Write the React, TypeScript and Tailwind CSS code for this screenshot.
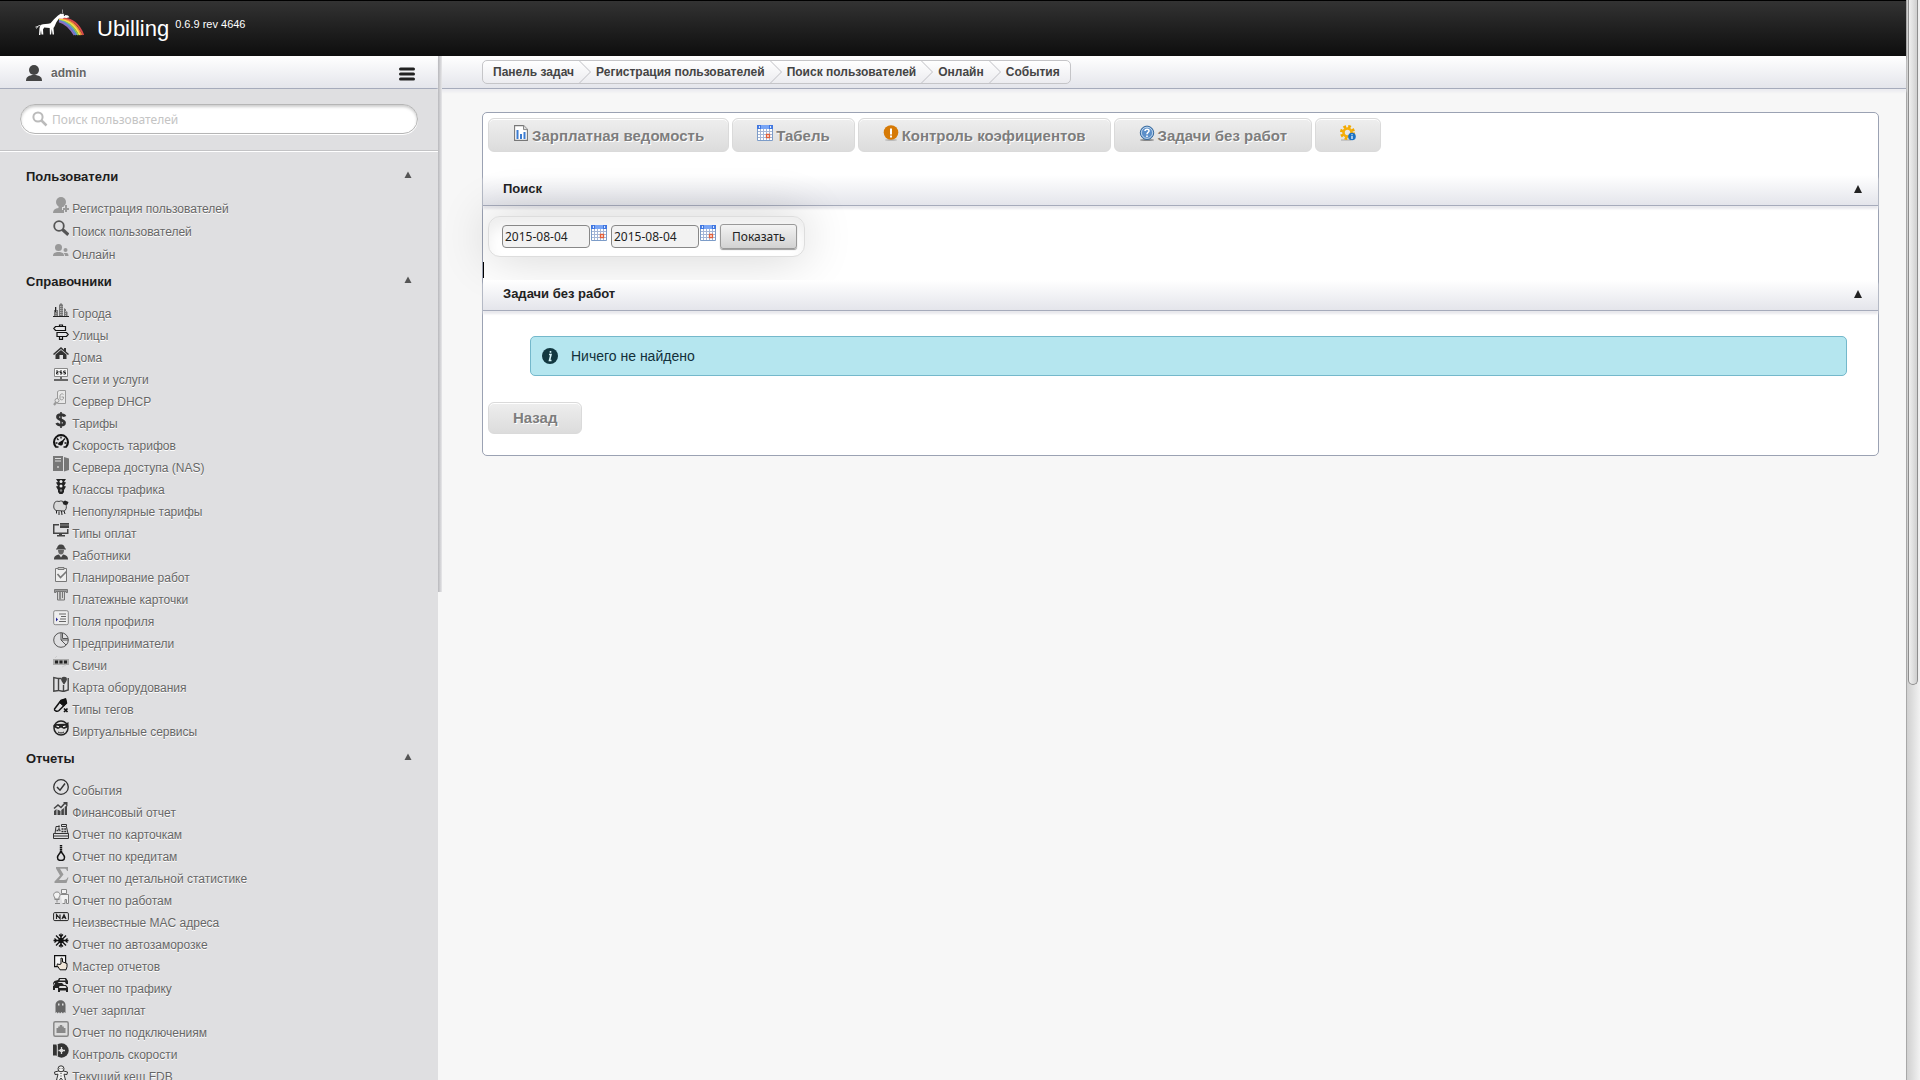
/**
 * Ubilling admin page
 *
 * Header, collapsible side menu, breadcrumbs and the "tasks without jobs" report.
 */

import { useState } from "react";
import type { ReactNode } from "react";

// 16x16 menu glyphs, keyed by the menu entry that uses them
const GLYPHS: Record<string, ReactNode> = {
  register: (
    <g fill="#999">
      <circle cx="8" cy="5" r="5" />
      <path d="M0 16c0-3 2-4.500 5.500-5V8h5l.2 2H9v3h2v3z" />
      <path d="M12 8h2v3h2v2h-2v2h-2v-2h-2v-2h2z" />
    </g>
  ),
  find: (
    <g fill="none" stroke="#555">
      <circle cx="6" cy="6" r="4.800" strokeWidth="1.800" />
      <path d="M9.500 9.500l5.800 5.300" strokeWidth="3.200" />
    </g>
  ),
  online: (
    <g fill="#999">
      <circle cx="5.500" cy="4.500" r="3.500" />
      <path d="M0 13c0-3 2-3.500 4-4h3c2 .5 4 1 4 4z" />
      <circle cx="12.500" cy="7" r="2" />
      <path d="M10.500 10h3c1.500.3 2 1 2 3h-3.500c0-1.500-.5-2-1.500-3z" />
    </g>
  ),
  cities: (
    <g>
      <path d="M1 15V8h1.500V5h1v3H5v7zM6 15V3l2-2 2 2v12zM11 15V6l2 1.500V9l1.500 1v5z" fill="#777" />
      <path d="M7.500 4v10M9 4v10M12.500 9v5M3 9v5" stroke="#ddd" strokeWidth=".6" strokeDasharray="1 1" />
      <path d="M0 14.500h16M2.500 5v5" stroke="#222" />
    </g>
  ),
  streets: (
    <g fill="#e4e4e6" stroke="#111" strokeWidth="1.200">
      <path d="M6.500 3V1h3v2M6.500 13v2.300h3V13" />
      <path d="M2.500 2.500h10v4h-10L.8 4.500zM4 8.500h9.500l1.700 2-1.700 2H4z" />
    </g>
  ),
  homes: (
    <g fill="#333">
      <path d="M8 1L0 8l1 1 7-6 7 6 1-1-3-2.600V2h-2v1.700z" />
      <path d="M2.500 8.500L8 4l5.500 4.500V13H10V9H6.500v4h-4z" />
    </g>
  ),
  networks: (
    <g>
      <path d="M1.500.5h13v8h-13z" fill="#f8f8f8" stroke="#888" />
      <path d="M3 3h2v1.500H3.500V6h2M7 6h1.800V4.500H7V3h2M10.500 6h2V4.500h-1.800V3h2" fill="none" stroke="#222" />
      <path d="M7 9h2v2h6v2H1v-2h6z" fill="#666" />
    </g>
  ),
  dhcp: (
    <g fill="#e8e8e8" stroke="#999">
      <path d="M4.500 1.500l2-1h6v13h-8z" />
      <path d="M10.500 4.500C10 3.500 7 3.500 7 6v3c1 1.500 4 1 3.500-2H8.500" fill="none" />
      <path d="M1 15l4-5" strokeWidth="2.200" />
      <circle cx="4" cy="10.500" r="2" />
    </g>
  ),
  tariffs: (
    <g fill="none" stroke="#333">
      <path d="M12 4.500C11 2.300 4.500 1.800 4.500 5c0 3.200 7 2.500 7 5.800 0 3.200-6.500 3-7.800.2" strokeWidth="2.800" />
      <path d="M8 0v16" strokeWidth="1.600" />
    </g>
  ),
  speed: (
    <g>
      <path d="M3 13A7 7 0 1 1 13 13" fill="none" stroke="#111" strokeWidth="2" />
      <path d="M2.500 9h2M4 4.500l1.500 1.500M8 2.500v2M12 4.500l-1.500 1.500M13.500 9h-2" stroke="#111" strokeWidth="1.300" />
      <path d="M5 10.500c0-2 1.500-2.500 2.500-3l4-2.500-1.500 4c0 2-1 2.500-2.500 2.500z" fill="#111" />
      <path d="M2.500 13h3M10.500 13h3" stroke="#111" strokeWidth="1.500" />
    </g>
  ),
  nas: (
    <g>
      <path d="M0 0h10v15H0zM11 1l5 1.500V14l-5 1.500z" fill="#777" />
      <path d="M2 2.500h6M2 5h6" stroke="#ddd" />
      <circle cx="5" cy="11" r="1" fill="#ccc" />
    </g>
  ),
  traffic: (
    <g>
      <path d="M3 1h10l-2 3 2 .5-2 3.500 2 .5-2 3.500v2l-1.500 2h-3L5 14v-2L3 8.500 5 8 3 4.500 5 4z" fill="#222" />
      <circle cx="8" cy="3.500" r="1.500" fill="#eee" />
      <circle cx="8" cy="8" r="1.500" fill="#eee" />
      <circle cx="8" cy="12.500" r="1.200" fill="#888" />
    </g>
  ),
  unpopular: (
    <g>
      <path d="M1.500 3C2 1 5 1 6 1.500c2-1 4-.5 5 1l2 2c1 3 0 6-2 6.500l-8-.5C0 9 .5 5 1.500 3z" fill="#d8d8d8" stroke="#444" />
      <path d="M9.500 2l2.500-1.500L15.500 2l-1 2.500-2 .5-2-.5z" fill="#222" />
      <path d="M3.500 11v2.500M6 11.500V15M8.500 11l.5 4M11 11l1 3" stroke="#222" />
    </g>
  ),
  payments: (
    <g fill="#444">
      <path d="M0 2h6v1.500H1.500v7H14V7h1.500v5H0zM6 12h3v1h3v1.500H4V13h2z" />
      <path d="M7 1h9v5H7z" />
      <path d="M7 3h9" stroke="#aaa" strokeWidth=".7" />
    </g>
  ),
  workers: (
    <g fill="#444">
      <path d="M4 4.500C4.500 1 6.500.5 8 .5s3.500.5 4 4h1v1H3v-1z" />
      <path d="M5 6h6c0 3-1.500 4.500-3 4.500S5 9 5 6z" fill="#666" />
      <path d="M1 15.500c0-3.500 2-4.500 5-5l2 3 2-3c3 .5 5 1.500 5 5z" />
    </g>
  ),
  planning: (
    <g fill="none" stroke="#777">
      <path d="M2.500 2.500h11v13h-11z" fill="#eee" />
      <path d="M5 1.500h6v2H5z" fill="#ccc" />
      <path d="M4.500 8l3 3.500L13.500 5.500" strokeWidth="1.600" />
    </g>
  ),
  cards: (
    <g stroke="#777">
      <path d="M1.500 1.500h13v3H13v-1H3v1H1.500z" fill="#999" />
      <path d="M4.500 3.500h7v8.500h-7z" fill="#d4d4d4" />
      <path d="M7 4v7.500" strokeWidth="1.500" />
      <path d="M9.500 4v6" />
    </g>
  ),
  fields: (
    <g>
      <rect x=".7" y=".7" width="14.600" height="14" rx="1.500" fill="#eee" stroke="#888" />
      <path d="M6 4h7M8 6.500h5M7 9h6M6 11.500h7" stroke="#666" />
      <path d="M3 7.500L5 9.500 3 11.500z" fill="#229" />
    </g>
  ),
  business: (
    <g fill="none" stroke="#555">
      <circle cx="8" cy="8" r="7.300" />
      <path d="M8 .7V8l5 5M8 8h7.300M9.500 1v5.500H15" />
    </g>
  ),
  switches: (
    <g>
      <path d="M0 5h16v6H0z" fill="#aaa" />
      <path d="M2 6.500h3v3H2zM6.500 6.500h3v3h-3zM11 6.500h3v3h-3z" fill="#222" />
      <path d="M2 4l2-2M9 13l4-2" stroke="#ccc" />
    </g>
  ),
  map: (
    <g fill="none" stroke="#444" strokeWidth="1.400">
      <path d="M5.500 14.500L.8 15.200V1.500L5.500 2.500v12l5 1 4.700-1.500V2M10.500 15V9M5.500 2.500H8" />
      <path d="M11 1.500c3 0 3 2.500 0 6-3-3.500-3-6 0-6z" fill="#444" />
    </g>
  ),
  tags: (
    <g fill="none" stroke="#111">
      <path d="M1.500 11L8 2.500 12.500 1l1 4L6 12.500c-2 1.500-5 .5-4.500-1.500z" strokeWidth="1.500" />
      <path d="M8 2.500l4.500-1.500 1 4-3 3-4-3.500z" fill="#111" />
      <path d="M11 10.500l3.500 3.500M14.500 10.500L11 14" strokeWidth="1.700" />
    </g>
  ),
  virtual: (
    <g>
      <circle cx="8" cy="8" r="7" fill="#ddd" stroke="#222" strokeWidth="1.500" />
      <path d="M.5 5l3-1 9-.2L15.500 2v5L11 9 8 7.500 5 9 .5 7z" fill="#222" />
      <path d="M3.500 6l2.500.8M10 6.800l2.500-.8" stroke="#fff" strokeWidth="1.200" />
      <path d="M5 12c2 1.300 4 1.300 6 0" fill="none" stroke="#222" />
    </g>
  ),
  events: (
    <g fill="none" stroke="#333">
      <circle cx="8" cy="8" r="7.300" strokeWidth="1.300" />
      <path d="M4 8l3 3.200L12 4.500" strokeWidth="1.500" />
    </g>
  ),
  finance: (
    <g fill="#444">
      <path d="M1 10l2.500-2V14H1zM4.500 8.500L7.500 10v4h-3zM8.300 9l2.600-2v7H8.300zM11.700 6l2.300-2v10h-2.300z" />
      <path d="M1 7.500L5 4l3 2.500L12 2" fill="none" stroke="#444" strokeWidth="1.500" />
      <path d="M10 1h4.500v4.500z" />
    </g>
  ),
  till: (
    <g fill="none" stroke="#333">
      <path d="M.5 10.500h15v5H.5zM2 10.500L3 3.500h3M1 13h14" />
      <path d="M8.500 1.500h5v2h-5zM13.500 4l1.500 6.500" />
      <path d="M6 2.500V7M3.500 7.500h4M8.500 6h5M8.500 8.500h5.500" strokeWidth="1.500" strokeDasharray="2 .7" />
    </g>
  ),
  credits: (
    <g fill="none" stroke="#111">
      <path d="M8 0v7" strokeWidth="2.400" strokeDasharray="1.600 .4" />
      <path d="M8 6.500c-1.500 2.500-3.500 3.500-3.500 6C4.500 14.500 6 15.500 8 15.500s3.500-1 3.500-3c0-2.500-2-3.500-3.500-6z" strokeWidth="1.500" />
    </g>
  ),
  stats: <path d="M3 0h12v4h-1c-.5-2-1-2.300-3-2.300H7l3.500 5.800L6 13h5c2 0 2.500-.7 3.500-2.500h1L13.500 16H1.500v-1.500L7 8.500 3 1.500z" fill="#999" />,
  jobs: (
    <g fill="#f2f2f2" stroke="#888">
      <path d="M8.500.5h5v4h-5zM7.500 5.500h8v9h-2v-4h-1.500v4H9.500" />
      <path d="M1.500 8C-.5 6 1 3 4 3s4 3 2 5v2H2zM1.500 10.500h5M4 10.500v3M2 14.500h5" />
    </g>
  ),
  unknown: (
    <g fill="none" stroke="#222">
      <rect x=".6" y="1.600" width="14.800" height="8" rx="1.200" />
      <path d="M3.500 8V3.700L7 7.700V3.500M9 8l2-4.300L13 8M9.500 6.700h3" strokeWidth="1.200" />
    </g>
  ),
  freeze: (
    <g stroke="#111" strokeWidth="1.300" fill="none">
      <path d="M8 .5v14M.5 7.500h15M3 2.500l10 10M13 2.500l-10 10" />
      <path d="M6 1.500l2 2 2-2M6 13.500l2-2 2 2M1.500 5.500l2 2-2 2M14.500 5.500l-2 2 2 2" />
      <circle cx="8" cy="7.500" r="2" />
    </g>
  ),
  master: (
    <g stroke="#111">
      <path d="M1.600.6h11v11h-11z" fill="#f5f5f5" strokeWidth="1.200" />
      <path d="M6 9.500l-1.500-.7-.5 1.500 3 4.500h6l1-3V8.500l-2-.7-1-.5-1.500-.3V3.500L8 3v6z" fill="#f0e6d8" />
    </g>
  ),
  cars: (
    <g fill="#222">
      <path d="M5 3L6 1h7l2 3v3h-2l-1-2H6L4.500 6H1L0 9V6l1.500-2z" />
      <path d="M1 8.500L2 6h7l2 2h2l2 2.500V15h-2v-1.500H7V15H5v-4H2v2H0V9z" />
      <path d="M6.500 9h6l1 2h-7.500zM7 2h5l.5 1.500H6.500z" fill="#ddd" />
    </g>
  ),
  salary: (
    <g>
      <path d="M2.500 14V6C2.500-.5 12.500-.5 12.500 6v8l-1.500-1-1 1.500L8.500 13 7 14.500 6 13l-1.500 1.500-.7-1.500z" fill="#666" />
      <path d="M5 4.500h1.500v2H5zM9 4.500h1.500v2H9z" fill="#ddd" />
    </g>
  ),
  signup: (
    <g>
      <rect x=".8" y=".8" width="14.400" height="14.400" rx="1.500" fill="#ddd" stroke="#888" strokeWidth="1.500" />
      <path d="M3.500 12V7h1.700V5.500h1.600V4h2.400v1.500h1.600V7h1.700v5z" fill="#888" />
    </g>
  ),
  control: (
    <g>
      <circle cx="8.500" cy="7.500" r="7.200" fill="#333" />
      <path d="M0 1.500h3.500v11H0z" fill="#333" />
      <path d="M4.300 2v11" stroke="#ddd" />
      <path d="M8.500 4v7M5.500 7.500h6.500" stroke="#ddd" strokeWidth="1.300" />
      <circle cx="8.500" cy="7.500" r="1.800" fill="#ddd" />
    </g>
  ),
  fdb: (
    <g fill="#eee" stroke="#333">
      <path d="M5.500 6L1.500 7l.5 2.500 3-.3-1.500 6 2.500.5L8 13l2 2.700 2.500-.5L11 9.200l3 .3.500-2.500-4-1z" />
      <circle cx="8" cy="3.800" r="3" />
      <path d="M6.500 3.500h.7M8.800 3.500h.7M8 8v1M8 10.500v1" />
    </g>
  ),
};

type MenuEntry = { glyph: string; label: string };

const MENU: { title: string; gap: string; items: MenuEntry[] }[] = [
  {
    title: "Пользователи",
    gap: "gap-px",
    items: [
      { glyph: "register", label: "Регистрация пользователей" },
      { glyph: "find", label: "Поиск пользователей" },
      { glyph: "online", label: "Онлайн" },
    ],
  },
  {
    title: "Справочники",
    gap: "gap-0",
    items: [
      { glyph: "cities", label: "Города" },
      { glyph: "streets", label: "Улицы" },
      { glyph: "homes", label: "Дома" },
      { glyph: "networks", label: "Сети и услуги" },
      { glyph: "dhcp", label: "Сервер DHCP" },
      { glyph: "tariffs", label: "Тарифы" },
      { glyph: "speed", label: "Скорость тарифов" },
      { glyph: "nas", label: "Сервера доступа (NAS)" },
      { glyph: "traffic", label: "Классы трафика" },
      { glyph: "unpopular", label: "Непопулярные тарифы" },
      { glyph: "payments", label: "Типы оплат" },
      { glyph: "workers", label: "Работники" },
      { glyph: "planning", label: "Планирование работ" },
      { glyph: "cards", label: "Платежные карточки" },
      { glyph: "fields", label: "Поля профиля" },
      { glyph: "business", label: "Предприниматели" },
      { glyph: "switches", label: "Свичи" },
      { glyph: "map", label: "Карта оборудования" },
      { glyph: "tags", label: "Типы тегов" },
      { glyph: "virtual", label: "Виртуальные сервисы" },
    ],
  },
  {
    title: "Отчеты",
    gap: "gap-0",
    items: [
      { glyph: "events", label: "События" },
      { glyph: "finance", label: "Финансовый отчет" },
      { glyph: "till", label: "Отчет по карточкам" },
      { glyph: "credits", label: "Отчет по кредитам" },
      { glyph: "stats", label: "Отчет по детальной статистике" },
      { glyph: "jobs", label: "Отчет по работам" },
      { glyph: "unknown", label: "Неизвестные MAC адреса" },
      { glyph: "freeze", label: "Отчет по автозаморозке" },
      { glyph: "master", label: "Мастер отчетов" },
      { glyph: "cars", label: "Отчет по трафику" },
      { glyph: "salary", label: "Учет зарплат" },
      { glyph: "signup", label: "Отчет по подключениям" },
      { glyph: "control", label: "Контроль скорости" },
      { glyph: "fdb", label: "Текущий кеш FDB" },
    ],
  },
];

const CRUMBS = ["Панель задач", "Регистрация пользователей", "Поиск пользователей", "Онлайн", "События"];

function Icon({ children, className = "inline-block align-baseline" }: { children: ReactNode; className?: string }) {
  return (
    <svg viewBox="0 0 16 16" className={`h-4 w-4 shrink-0 ${className}`} aria-hidden="true">
      {children}
    </svg>
  );
}

function Logo() {
  return (
    <svg viewBox="0 0 50 28" className="h-7 w-[50px]" aria-hidden="true">
      <g fill="none" strokeWidth="1.800">
        <path d="M24 10C37 8 44 15 48.300 26" stroke="#d9484d" />
        <path d="M24 10.500C36 9.500 42 17 46.500 26" stroke="#f08a3c" />
        <path d="M24 11C35 11 41 18 44.700 26" stroke="#f5e04a" />
        <path d="M24 11.500C34 12.500 39.500 19 43 26" stroke="#8fc85a" />
        <path d="M24 12C33 13.500 38 20 41.300 26" stroke="#5b8fd8" />
        <path d="M24 12.300C32 14.500 36.500 21 39.500 26" stroke="#8a6fc0" />
      </g>
      <path
        d="M5.500 16c3-1.500 7-.8 10-1.800l3.500-4 4-3.700 3-2 1 .8 1-1 1 1.500 4 .7 1.500 1.700-3 .8-2.500-.2-1.500 1-3.500-.3-2.500 3.500-2 4.500-1 1.500.5 6.500h-1.400l-.8-5.500-.7 5.500h-1.200l-.2-6.500-5.500-.5-1.200 2 .3 5H6.500L6 21l-.7 5H4l.5-7z"
        fill="#fff"
      />
      <path d="M5 16.500c-2 0-2 1.500-4.500 1.500M3 17l-1.500 2.500" stroke="#ddd" fill="none" />
      <path d="M27.500 4V.5" stroke="#aaa" strokeWidth=".8" />
      <circle cx="29.500" cy="6.300" r=".7" fill="#222" />
    </svg>
  );
}

function CalendarGlyph() {
  return (
    <>
      <path d="M.5.5h15v15H.5z" fill="#fff" stroke="#7c9cc8" />
      <path d="M1 6.500h14M1 9.500h14M1 12.500h14M3.500 4v11M6.500 4v11M9.500 4v11M12.500 4v11" stroke="#a5b6d6" />
      <path d="M0 0h16v4H0z" fill="#3f76e0" />
      <path d="M4 0h8v4H4z" fill="#79a5f5" />
      <path d="M3 .8v2.400L1.500 2zM13 .8v2.400L14.500 2z" fill="#fff" />
      <path d="M9.500 9.500h3v3h-3z" fill="#fff" stroke="#e2603a" strokeWidth="1.300" />
    </>
  );
}

const TOOLBAR: { label: string; glyph: ReactNode }[] = [
  {
    label: "Зарплатная ведомость",
    glyph: (
      <>
        <path d="M1.600.6h9l3.800 3.800v11H1.600z" fill="#fff" stroke="#777" strokeWidth="1.100" />
        <path d="M10.500.6v4h4" fill="#ddd" stroke="#888" />
        <path d="M3.500 5h2v9h-2zM7 9h2v5H7zM10.500 7h2v7h-2z" fill="#3b7bd0" />
      </>
    ),
  },
  { label: "Табель", glyph: <CalendarGlyph /> },
  {
    label: "Контроль коэфициентов",
    glyph: (
      <>
        <ellipse cx="8" cy="15" rx="6" ry="1" fill="#bbb" />
        <circle cx="8" cy="7.500" r="7.300" fill="#d67a06" />
        <path d="M7 3.500h2v6H7zM7 10.500h2v2H7z" fill="#fff" />
      </>
    ),
  },
  {
    label: "Задачи без работ",
    glyph: (
      <>
        <ellipse cx="8" cy="15" rx="7" ry="1" fill="#888" />
        <circle cx="8" cy="7.800" r="6.700" fill="#5c8fc9" stroke="#376a9d" />
        <circle cx="8" cy="7.800" r="5.600" fill="none" stroke="#d5e4f3" strokeWidth=".8" />
        <path d="M6 6c0-2.500 4.300-2.300 4 0-.2 1.500-2 1.300-2 3.200M8 10.500v1.500" fill="none" stroke="#fff" strokeWidth="1.600" />
      </>
    ),
  },
  {
    label: "",
    glyph: (
      <>
        <path d="M1 15h10" stroke="#bbb" strokeWidth="1.500" />
        <circle cx="7.500" cy="7.500" r="6" fill="none" stroke="#f2a900" strokeWidth="3" strokeDasharray="2.600 2.110" />
        <circle cx="7.500" cy="7.500" r="4" fill="none" stroke="#f5ae0a" strokeWidth="2.600" />
        <circle cx="12" cy="11.500" r="3.800" fill="#1c72c4" />
        <path d="M12 9.300v1M12 11v3" stroke="#fff" strokeWidth="1.200" />
      </>
    ),
  },
];

const BUTTON =
  "flex items-center rounded-md border border-[#dadada] bg-linear-to-b from-[#eeeeee] to-[#dcdcdc] px-6 text-[15px] leading-[30px] font-bold text-[#7d7d7d] shadow-[inset_0_1px_0_#ffffff] [text-shadow:1px_1px_0_#ffffff]";

const BAR = "border-b border-[#a6abbb] bg-linear-to-b from-white to-[#e4e5eb]";

function MenuSection({ title, gap, items }: { title: string; gap: string; items: MenuEntry[] }) {
  const [open, setOpen] = useState(true);

  return (
    <section className="pb-[7px]">
      <h3>
        <button
          type="button"
          onClick={() => setOpen(!open)}
          className="flex w-full items-start justify-between pr-[26px] pl-[26px] text-left text-[13px] leading-5 font-bold text-[#1d1d1d]"
        >
          <span>{title}</span>
          <svg viewBox="0 0 8 8" className="mt-1 h-2 w-2" aria-hidden="true">
            <path d="M4 .5L7.500 7H.5z" fill="#555" />
          </svg>
        </button>
      </h3>
      {open && (
        <ul className={`flex flex-col pt-[10px] pl-[53px] leading-5 ${gap}`}>
          {items.map((item) => (
            <li key={item.label}>
              <a href="#" className="text-[#666666]">
                <Icon>{GLYPHS[item.glyph]}</Icon> {item.label}
              </a>
            </li>
          ))}
        </ul>
      )}
    </section>
  );
}

function Sidebar() {
  return (
    <aside className="w-[438px] shrink-0 bg-[#dfdfe1] [text-shadow:0_1px_0_#ffffff]">
      <div className={`flex h-[33px] items-center justify-between pt-[2px] pr-[23px] pl-[26px] ${BAR}`}>
        <a href="#" className="flex items-center gap-[9px] font-bold text-[#666666]">
          <Icon className="block">
            <g fill="#444">
              <circle cx="8" cy="5" r="5" />
              <path d="M0 16c0-4 2-5 6-6h4c4 1 6 2 6 6z" />
            </g>
          </Icon>
          admin
        </a>
        <button type="button" aria-label="Меню">
          <Icon className="block">
            <path d="M1.500 4h13M1.500 9h13M1.500 14h13" stroke="#222" strokeWidth="3" strokeLinecap="round" />
          </Icon>
        </button>
      </div>

      <div className="border-b border-[#c3c3c5] px-5 pt-[15px] pb-4">
        <label className="flex h-[30px] items-center gap-1 rounded-full border border-[#b5b5b5] bg-white px-[11px] shadow-[inset_0_2px_3px_#cccccc,0_1px_0_#ffffff]">
          <Icon className="block">
            <circle cx="6" cy="6" r="4.600" fill="none" stroke="#bbb" strokeWidth="2" />
            <path d="M9.500 9.500l5 5" stroke="#bbb" strokeWidth="2.500" />
          </Icon>
          <input
            type="text"
            aria-label="Поиск пользователей"
            placeholder="Поиск пользователей"
            className="w-full bg-transparent pt-[2px] font-['Noto_Sans',sans-serif] text-xs outline-none placeholder:text-[#c4c4c4]"
          />
        </label>
      </div>

      <nav className="border-t border-white pt-[15px]">
        {MENU.map((section) => (
          <MenuSection key={section.title} {...section} />
        ))}
      </nav>
    </aside>
  );
}

function Breadcrumbs() {
  return (
    <nav className={`flex h-[33px] shrink-0 items-center pl-11 shadow-[0_3px_2px_#ececf0] ${BAR}`}>
      <ol className="flex h-6 items-stretch overflow-hidden rounded-[5px] border border-[#c5c5c8] bg-linear-to-b from-white to-[#ececf0] px-[10px] font-bold">
        {CRUMBS.map((crumb, i) => (
          <li key={crumb} className="flex items-stretch">
            {i > 0 && (
              <svg viewBox="0 0 12 22" className="mr-[5px] ml-[5px] h-[22px] w-3" aria-hidden="true">
                <path d="M.5 0L11.500 11 .5 22" fill="none" stroke="#bfbfc4" />
              </svg>
            )}
            <a href="#" className="leading-[22px] text-[#444444]">
              {crumb}
            </a>
          </li>
        ))}
      </ol>
    </nav>
  );
}

function PanelHeader({ title, open, onToggle }: { title: string; open: boolean; onToggle: () => void }) {
  return (
    <h3>
      <button
        type="button"
        aria-expanded={open}
        onClick={onToggle}
        className={`flex h-[31px] w-full items-center justify-between pr-4 pb-[2px] pl-5 text-[13px] font-bold text-[#222222] shadow-[0_3px_2px_#e9e9ed] ${BAR}`}
      >
        <span>{title}</span>
        <svg viewBox="0 0 8 8" className="h-2 w-2" aria-hidden="true">
          <path d="M4 0L8 8H0z" fill="#222" />
        </svg>
      </button>
    </h3>
  );
}

function DateField({ label }: { label: string }) {
  return (
    <div className="flex items-start gap-px pt-px">
      <input
        type="text"
        aria-label={label}
        defaultValue="2015-08-04"
        className="h-[23px] w-[88px] rounded border border-[#888888] bg-[#f2f2f2] px-[2px] text-xs text-[#222222]"
      />
      <Icon className="block">
        <CalendarGlyph />
      </Icon>
    </div>
  );
}

function Content() {
  const [searchOpen, setSearchOpen] = useState(true);
  const [tasksOpen, setTasksOpen] = useState(true);

  return (
    <main className="mt-[23px] mr-[27px] ml-11 rounded-[5px] border border-[#9ba2b3] bg-white pb-[21px]">
      {/* Toolbar */}
      <div className="flex gap-[3px] px-[5px] pt-[5px] pb-[23px]">
        {TOOLBAR.map((item) => (
          <a key={item.label} href="#" className={`h-[34px] gap-[3px] pt-[2px] ${BUTTON}`}>
            <Icon className="mb-[6px] block">{item.glyph}</Icon>
            {item.label}
          </a>
        ))}
      </div>

      {/* Search */}
      <PanelHeader title="Поиск" open={searchOpen} onToggle={() => setSearchOpen(!searchOpen)} />
      {searchOpen && (
        <div className="px-[5px] pt-[10px] pb-[5px]">
          <form
            onSubmit={(e) => e.preventDefault()}
            className="flex h-[41px] w-fit items-start gap-1 rounded-xl border border-[#dddddd] bg-white pt-[7px] pr-[7px] pl-[13px] font-['Noto_Sans',sans-serif] shadow-[0_0_50px_#00000030,inset_0_10px_14px_#eeeeee]"
          >
            <DateField label="С" />
            <DateField label="По" />
            <button
              type="submit"
              className="h-[25px] rounded-[3px] border border-[#999999] bg-linear-to-b from-[#f3f3f3] to-[#d2d2d2] px-[11px] text-xs text-[#222222] shadow-[0_1px_1px_#999999]"
            >
              Показать
            </button>
          </form>
        </div>
      )}
      <div className="mb-[2px] h-4 w-px bg-black" />

      {/* Tasks without jobs */}
      <PanelHeader title="Задачи без работ" open={tasksOpen} onToggle={() => setTasksOpen(!tasksOpen)} />
      {tasksOpen && (
        <div className="pt-[25px] pr-[31px] pb-[26px] pl-[47px]">
          <div className="flex h-10 items-center gap-[13px] rounded-[5px] border border-[#74b8cb] bg-[#b5e6ef] px-[11px] text-sm text-[#12303a]">
            <Icon className="block">
              <circle cx="8" cy="8" r="8" fill="#123840" />
              <path d="M7 6.500h2L7.500 12.500h2M8.500 3v1.800" fill="none" stroke="#d5f2f7" strokeWidth="1.600" />
            </Icon>
            Ничего не найдено
          </div>
        </div>
      )}

      <div className="flex px-[5px]">
        <a href="#" className={`h-8 ${BUTTON}`}>
          Назад
        </a>
      </div>
    </main>
  );
}

export default function App() {
  return (
    <div className="flex h-screen overflow-hidden bg-[#f7f7f7] font-['Liberation_Sans',Arial,sans-serif] text-xs">
      <div className="flex min-w-0 flex-1 flex-col">
        {/* Header */}
        <header className="flex h-14 shrink-0 items-start border-t border-black bg-linear-to-b from-[#333333] to-[#0e0e0e] pl-[35px] text-white">
          <div className="pt-2">
            <Logo />
          </div>
          <h1 className="pt-[14px] pl-3 text-[22px] leading-7">Ubilling</h1>
          <span className="pt-[15px] pl-[6px] text-[11px] leading-4">0.6.9 rev 4646</span>
        </header>

        <div className="flex min-h-0 flex-1 items-start">
          <Sidebar />
          <div className="relative min-w-0 flex-1">
            <Breadcrumbs />
            <Content />
            <div className="absolute top-0 left-0 h-[536px] w-1 bg-linear-to-r from-[#b8b8bc] to-[#e8e8ea]" />
          </div>
        </div>
      </div>

      {/* Scrollbar */}
      <div className="h-full w-[14px] shrink-0 border-l border-[#a8a8a8] bg-linear-to-r from-[#d0d0d0] to-[#f2f2f2] pr-[2px] pl-px">
        <div className="h-[685px] rounded-b-md border border-t-0 border-[#8e8e8e] bg-linear-to-r from-[#f0f0f0] to-[#cfcfcf]" />
      </div>
    </div>
  );
}
